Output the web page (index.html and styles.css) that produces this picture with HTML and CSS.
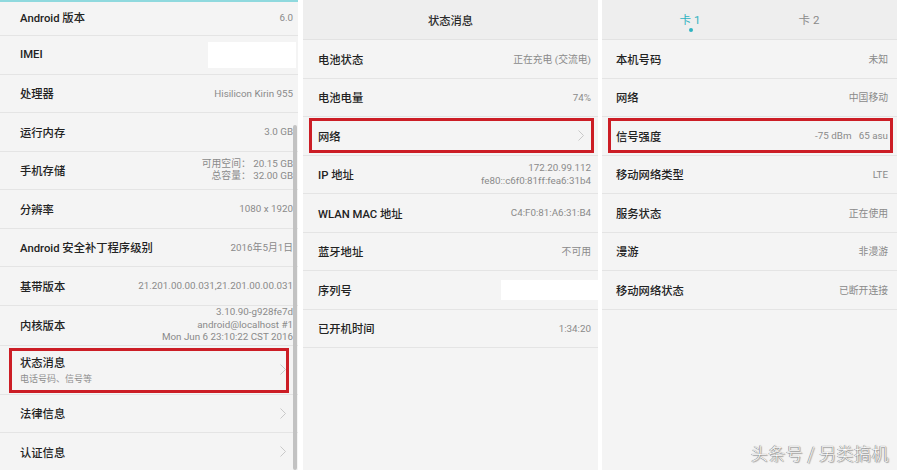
FILE: index.html
```html
<!DOCTYPE html>
<html lang="zh-CN">
<head>
<meta charset="utf-8">
<title>状态消息</title>
<link rel="stylesheet" href="styles.css">
</head>
<body>
<div class="page">
  <section class="panel p1">
    <div class="topline"></div>
    <div class="row first"><span class="label">Android 版本</span><span class="value">6.0</span></div>
    <div class="row"><span class="label">IMEI</span><span class="mask imei"></span></div>
    <div class="row"><span class="label">处理器</span><span class="value">Hisilicon Kirin 955</span></div>
    <div class="row"><span class="label">运行内存</span><span class="value">3.0 GB</span></div>
    <div class="row"><span class="label">手机存储</span><span class="value multi"><span>可用空间： 20.15 GB</span><span>总容量： 32.00 GB</span></span></div>
    <div class="row"><span class="label">分辨率</span><span class="value">1080 x 1920</span></div>
    <div class="row"><span class="label">Android 安全补丁程序级别</span><span class="value">2016年5月1日</span></div>
    <div class="row"><span class="label">基带版本</span><span class="value">21.201.00.00.031,21.201.00.00.031</span></div>
    <div class="row tall"><span class="label">内核版本</span><span class="value multi"><span>3.10.90-g928fe7d</span><span>android@localhost #1</span><span>Mon Jun 6 23:10:22 CST 2016</span></span></div>
    <div class="row double hl hl-left">
      <span class="labels"><span class="label">状态消息</span><span class="sub">电话号码、信号等</span></span>
      <svg class="chev" viewBox="0 0 6 11" width="6" height="11"><polyline points="0.5,0.5 5.5,5.5 0.5,10.5"/></svg>
    </div>
    <div class="row"><span class="label">法律信息</span><svg class="chev" viewBox="0 0 6 11" width="6" height="11"><polyline points="0.5,0.5 5.5,5.5 0.5,10.5"/></svg></div>
    <div class="row"><span class="label">认证信息</span><svg class="chev" viewBox="0 0 6 11" width="6" height="11"><polyline points="0.5,0.5 5.5,5.5 0.5,10.5"/></svg></div>
    <div class="scrollbar"></div>
  </section>

  <section class="panel p2">
    <header class="head"><span class="title">状态消息</span></header>
    <div class="row"><span class="label">电池状态</span><span class="value">正在充电 (交流电)</span></div>
    <div class="row"><span class="label">电池电量</span><span class="value">74%</span></div>
    <div class="row hl hl-mid"><span class="label">网络</span><svg class="chev" viewBox="0 0 6 11" width="6" height="11"><polyline points="0.5,0.5 5.5,5.5 0.5,10.5"/></svg></div>
    <div class="row"><span class="label">IP 地址</span><span class="value multi ip"><span>172.20.99.112</span><span>fe80::c6f0:81ff:fea6:31b4</span></span></div>
    <div class="row"><span class="label">WLAN MAC 地址</span><span class="value">C4:F0:81:A6:31:B4</span></div>
    <div class="row"><span class="label">蓝牙地址</span><span class="value">不可用</span></div>
    <div class="row"><span class="label">序列号</span><span class="mask serial"></span></div>
    <div class="row"><span class="label">已开机时间</span><span class="value">1:34:20</span></div>
  </section>

  <section class="panel p3">
    <header class="head tabs">
      <span class="tab active">卡 1<i class="dot"></i></span>
      <span class="tab">卡 2</span>
    </header>
    <div class="row"><span class="label">本机号码</span><span class="value">未知</span></div>
    <div class="row"><span class="label">网络</span><span class="value">中国移动</span></div>
    <div class="row hl hl-right"><span class="label">信号强度</span><span class="value">-75 dBm&nbsp;&nbsp;&nbsp;65 asu</span></div>
    <div class="row"><span class="label">移动网络类型</span><span class="value">LTE</span></div>
    <div class="row"><span class="label">服务状态</span><span class="value">正在使用</span></div>
    <div class="row"><span class="label">漫游</span><span class="value">非漫游</span></div>
    <div class="row"><span class="label">移动网络状态</span><span class="value">已断开连接</span></div>
    <div class="watermark">头条号 / 另类搞机</div>
  </section>
</div>
</body>
</html>
```

FILE: styles.css
```css
* { box-sizing: border-box; }

html, body {
  margin: 0;
  padding: 0;
  background: #ffffff;
}

body {
  width: 900px;
  height: 470px;
  overflow: hidden;
  font-family: "Roboto", "Noto Sans CJK SC", "Noto Sans", sans-serif;
}

.page {
  display: flex;
  gap: 5px;
  width: 900px;
  height: 470px;
}

.panel {
  position: relative;
  background: #f4f4f4;
  height: 470px;
  overflow: hidden;
}

.p1 { width: 298px; }
.p2 { width: 295px; }
.p3 { width: 295px; margin-left: -1px; }

.topline {
  height: 2px;
  background: #8fd9de;
}

.row {
  position: relative;
  display: flex;
  align-items: center;
  justify-content: space-between;
  height: 38.5px;
  border-bottom: 1px solid #e4e4e4;
}

.p1 .row { padding: 0 5px 0 20px; }
.p2 .row { padding: 0 7px 0 15px; }
.p3 .row { padding: 0 9px 0 14px; }

.p1 .row.first { height: 34px; padding-bottom: 3px; }
.p1 .row.tall { height: 40px; }
.p1 .row.double { height: 49px; }

.label {
  font-size: 11.3px;
  font-weight: 500;
  color: #222222;
  white-space: nowrap;
}

.labels {
  display: flex;
  flex-direction: column;
  gap: 2px;
}

.sub {
  font-size: 9px;
  color: #8e8e8e;
}

.value {
  font-size: 9.8px;
  color: #8a8a8a;
  white-space: nowrap;
  text-align: right;
}

.value.multi {
  display: flex;
  flex-direction: column;
  align-items: flex-end;
  line-height: 12.5px;
}

.value.ip { line-height: 13px; }

.chev {
  fill: none;
  stroke: #c9c9c9;
  stroke-width: 1;
  margin-right: 7px;
}

.p2 .chev { margin-right: 7px; }

.mask {
  display: block;
  background: #ffffff;
}

.mask.imei {
  width: 88px;
  height: 26px;
  margin-right: -3px;
}

.mask.serial {
  width: 97px;
  height: 20px;
  margin-right: -7px;
}

.hl::after {
  content: "";
  position: absolute;
  border: 3px solid #cc1d25;
  pointer-events: none;
}

.hl-left::after { top: 2px; bottom: 1px; left: 9px; right: 9px; }
.hl-mid::after { top: 1px; bottom: 2px; left: 6px; right: 4px; }
.hl-right::after { top: 1px; bottom: 2px; left: 6px; right: 4px; }

.scrollbar {
  position: absolute;
  top: 125px;
  right: 1px;
  width: 4px;
  bottom: 0;
  background: #c2c2c2;
  border-radius: 2px;
}

.head {
  height: 40px;
  background: #eeeeee;
  border-bottom: 1px solid #e2e2e2;
  display: flex;
  align-items: center;
  justify-content: center;
}

.title {
  font-size: 11.3px;
  font-weight: 500;
  color: #2a2a2a;
}

.tabs { padding-bottom: 2px; }

.tab {
  position: relative;
  width: 119px;
  text-align: center;
  font-size: 11.5px;
  color: #8a8a8a;
}

.tab.active { color: #2fb3c1; }

.dot {
  position: absolute;
  left: 50%;
  top: 17px;
  width: 4px;
  height: 4px;
  margin-left: -1px;
  border-radius: 50%;
  background: #2fb3c1;
}

.watermark {
  position: absolute;
  right: 8px;
  bottom: 5px;
  font-family: "Noto Sans CJK SC", sans-serif;
  font-size: 17px;
  font-weight: 300;
  color: #ffffff;
  letter-spacing: 0.5px;
  text-shadow: 0 0 1px #6a6a6a, 1px 1px 1px #9a9a9a, -0.5px -0.5px 0 #8a8a8a;
}
```
